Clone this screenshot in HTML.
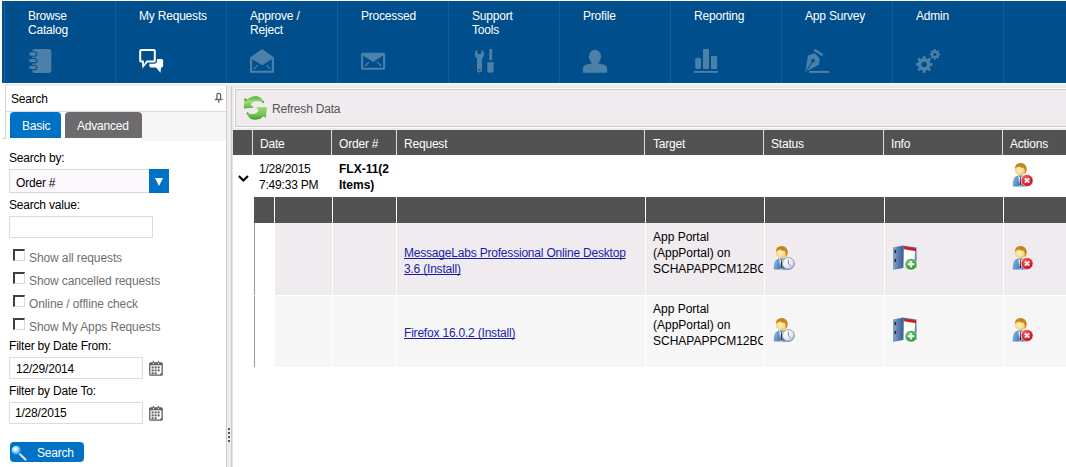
<!DOCTYPE html>
<html><head><meta charset="utf-8">
<style>
*{margin:0;padding:0;box-sizing:border-box}
html,body{width:1066px;height:467px;overflow:hidden;background:#fff;font-family:"Liberation Sans",sans-serif;font-size:12px;letter-spacing:-0.2px;color:#000}
.a{position:absolute}
.t{position:absolute;white-space:nowrap;line-height:16px}
/* nav */
#nav{position:absolute;left:2px;top:1px;width:1064px;height:82px;background:#004f8c}
.sep{position:absolute;top:0;width:1px;height:82px;background:#0760aa}
.nl{position:absolute;top:9px;color:#fff;line-height:14px;white-space:nowrap}
.ic{position:absolute;top:48px;width:24px;height:24px}
/* left */
.lbl{position:absolute;left:9px;line-height:16px;white-space:nowrap}
.chk{position:absolute;left:13px;width:12px;height:12px;border:1px solid #d8d8d8;border-top:2px solid #3f3f3f;border-left:2px solid #3f3f3f;background:#fff}
.ctx{position:absolute;left:29px;color:#707070;line-height:16px;white-space:nowrap;letter-spacing:-0.1px}
.inp{position:absolute;left:9px;border:1px solid #dcdcdc;background:#fff}
/* grid */
.hd{position:absolute;top:130px;height:25px;background:#525252}
.hdt{position:absolute;top:136px;color:#fff;line-height:16px;white-space:nowrap}
.sh{position:absolute;top:197px;height:26px;background:#525252}
.r1{position:absolute;top:223px;height:72px;background:#efebef}
.r2{position:absolute;top:296px;height:71px;background:#f6f6f6}
.lnk{color:#1c1ca8;text-decoration:underline;text-decoration-skip-ink:none}
</style></head><body>

<!-- NAV -->
<div id="nav">
  <div class="a" style="left:2px;top:0;width:1px;height:82px;background:#0b62a8"></div>
  <div class="sep" style="left:113px"></div>
  <div class="sep" style="left:224px"></div>
  <div class="sep" style="left:335px"></div>
  <div class="sep" style="left:446px"></div>
  <div class="sep" style="left:557px"></div>
  <div class="sep" style="left:668px"></div>
  <div class="sep" style="left:779px"></div>
  <div class="sep" style="left:890px"></div>
  <div class="sep" style="left:1001px"></div>
</div>
<div class="nl" style="left:28px">Browse<br>Catalog</div>
<div class="nl" style="left:139px">My Requests</div>
<div class="nl" style="left:250px">Approve /<br>Reject</div>
<div class="nl" style="left:361px">Processed</div>
<div class="nl" style="left:472px">Support<br>Tools</div>
<div class="nl" style="left:583px">Profile</div>
<div class="nl" style="left:694px">Reporting</div>
<div class="nl" style="left:805px">App Survey</div>
<div class="nl" style="left:916px">Admin</div>

<!-- LEFT PANEL -->
<div class="a" style="left:5px;top:86px;width:1px;height:52px;background:#d4d4d4"></div>
<div class="a" style="left:2px;top:138px;width:4px;height:1px;background:#d4d4d4"></div>
<div class="t" style="left:11px;top:91px">Search</div>
<div class="a" style="left:5px;top:111px;width:222px;height:1px;background:#dcdcdc"></div>
<div class="a" style="left:142px;top:112px;width:84px;height:29px;background:#f6f6f6"></div>
<div class="a" style="left:10px;top:112px;width:51px;height:26px;background:#0072c6;border-radius:4px 4px 0 0"></div>
<div class="t" style="left:22px;top:118px;color:#fff">Basic</div>
<div class="a" style="left:65px;top:112px;width:77px;height:26px;background:#6d6b6d;border-radius:4px 4px 0 0"></div>
<div class="t" style="left:77px;top:118px;color:#fff">Advanced</div>

<div class="lbl" style="top:150px">Search by:</div>
<div class="inp" style="top:169px;width:160px;height:24px;background:#fdf8fd;border-color:#d8d8d8"></div>
<div class="t" style="left:16px;top:175px">Order #</div>
<div class="a" style="left:149px;top:169px;width:20px;height:24px;background:#0072c6"></div>
<div class="a" style="left:155px;top:178px;width:0;height:0;border-left:4px solid transparent;border-right:4px solid transparent;border-top:8px solid #fff"></div>

<div class="lbl" style="top:197px">Search value:</div>
<div class="inp" style="top:216px;width:144px;height:22px"></div>

<div class="chk" style="top:249px"></div><div class="ctx" style="top:250px">Show all requests</div>
<div class="chk" style="top:272px"></div><div class="ctx" style="top:273px">Show cancelled requests</div>
<div class="chk" style="top:295px"></div><div class="ctx" style="top:296px">Online / offline check</div>
<div class="chk" style="top:318px"></div><div class="ctx" style="top:319px">Show My Apps Requests</div>

<div class="lbl" style="top:338px">Filter by Date From:</div>
<div class="inp" style="top:357px;width:134px;height:22px"></div>
<div class="t" style="left:16px;top:361px">12/29/2014</div>
<div class="lbl" style="top:383px">Filter by Date To:</div>
<div class="inp" style="top:402px;width:134px;height:22px"></div>
<div class="t" style="left:15px;top:405px">1/28/2015</div>

<div class="a" style="left:10px;top:442px;width:74px;height:20px;background:#0072c6;border-radius:4px"></div>
<div class="t" style="left:37px;top:445px;color:#fff">Search</div>

<!-- band under nav -->
<div class="a" style="left:2px;top:84px;width:1064px;height:2px;background:#eeeeee"></div>
<!-- splitter -->
<div class="a" style="left:226px;top:86px;width:1px;height:381px;background:#cdcdcd"></div>
<div class="a" style="left:227px;top:86px;width:4px;height:381px;background:#efebef"></div>
<div class="a" style="left:231px;top:86px;width:1px;height:381px;background:#cdcdcd"></div>
<div class="a" style="left:232px;top:86px;width:834px;height:44px;background:#ebebeb"></div>
<div class="a" style="left:232px;top:130px;width:1px;height:337px;background:#e4e4e4"></div>

<!-- toolbar -->
<div class="a" style="left:234px;top:88px;width:832px;height:40px;border:1px solid #fff;border-right:none"></div>
<div class="a" style="left:235px;top:89px;width:831px;height:38px;background:#efebef;border:1px solid #cdcdcd;border-right:none"></div>
<div class="t" style="left:272px;top:101px;color:#555">Refresh Data</div>

<!-- grid header -->
<div class="a" style="left:233px;top:130px;width:833px;height:25px;background:#dcdcdc"></div>
<div class="hd" style="left:233px;width:19px"></div>
<div class="hd" style="left:253px;width:78px"></div>
<div class="hd" style="left:332px;width:64px"></div>
<div class="hd" style="left:397px;width:247px"></div>
<div class="hd" style="left:645px;width:118px"></div>
<div class="hd" style="left:764px;width:119px"></div>
<div class="hd" style="left:884px;width:118px"></div>
<div class="hd" style="left:1003px;width:63px"></div>
<div class="hdt" style="left:260px">Date</div>
<div class="hdt" style="left:339px">Order #</div>
<div class="hdt" style="left:404px">Request</div>
<div class="hdt" style="left:653px">Target</div>
<div class="hdt" style="left:771px">Status</div>
<div class="hdt" style="left:891px">Info</div>
<div class="hdt" style="left:1010px">Actions</div>

<!-- row 1 -->
<div class="t" style="left:259px;top:161px">1/28/2015<br>7:49:33 PM</div>
<div class="t" style="left:339px;top:161px;font-weight:bold;letter-spacing:0">FLX-11(2<br>Items)</div>

<!-- sub header -->
<div class="sh" style="left:254px;width:20px"></div>
<div class="sh" style="left:275px;width:57px"></div>
<div class="sh" style="left:333px;width:63px"></div>
<div class="sh" style="left:397px;width:248px"></div>
<div class="sh" style="left:646px;width:118px"></div>
<div class="sh" style="left:765px;width:119px"></div>
<div class="sh" style="left:885px;width:118px"></div>
<div class="sh" style="left:1004px;width:62px"></div>

<!-- child rows -->
<div class="a" style="left:254px;top:223px;width:1px;height:72px;background:#999"></div>
<div class="a" style="left:254px;top:296px;width:1px;height:71px;background:#999"></div>
<div class="r1" style="left:275px;width:57px"></div>
<div class="r1" style="left:333px;width:63px"></div>
<div class="r1" style="left:397px;width:248px"></div>
<div class="r1" style="left:646px;width:118px"></div>
<div class="r1" style="left:765px;width:119px"></div>
<div class="r1" style="left:885px;width:118px"></div>
<div class="r1" style="left:1004px;width:62px"></div>
<div class="r2" style="left:275px;width:57px"></div>
<div class="r2" style="left:333px;width:63px"></div>
<div class="r2" style="left:397px;width:248px"></div>
<div class="r2" style="left:646px;width:118px"></div>
<div class="r2" style="left:765px;width:119px"></div>
<div class="r2" style="left:885px;width:118px"></div>
<div class="r2" style="left:1004px;width:62px"></div>

<div class="t lnk" style="left:404px;top:245px">MessageLabs Professional Online Desktop<br>3.6 (Install)</div>
<div class="t lnk" style="left:404px;top:325px">Firefox 16.0.2 (Install)</div>
<div class="t" style="left:653px;top:229px;width:110px;overflow:hidden;letter-spacing:0">App Portal<br>(AppPortal) on<br>SCHAPAPPCM12BOM</div>
<div class="t" style="left:653px;top:301px;width:110px;overflow:hidden;letter-spacing:0">App Portal<br>(AppPortal) on<br>SCHAPAPPCM12BOM</div>


<svg class="a" style="left:0;top:0" width="1066" height="467" viewBox="0 0 1066 467">
 <g fill="#4b80a8">
  <!-- notebook -->
  <rect x="32" y="49" width="19.3" height="24" rx="3"/>
  <g stroke="#004f8c" stroke-width="1.1">
   <rect x="28.6" y="51.8" width="8.2" height="4.4" rx="2.2"/>
   <rect x="28.6" y="58.5" width="8.2" height="4.4" rx="2.2"/>
   <rect x="28.6" y="65.2" width="8.2" height="4.4" rx="2.2"/>
  </g>
  <!-- open envelope -->
  <path d="M250 57.5 L262.2 49 L274 57.5 L274 72.8 L250 72.8 Z M252.2 59.3 L252.2 70.8 L271.8 70.8 L271.8 59.3 L262.2 65.2 Z"/>
  <path d="M254 69 L257.6 65.2" stroke="#4b80a8" stroke-width="1.2" fill="none"/>
  <path d="M270.2 69 L266.6 65.2" stroke="#4b80a8" stroke-width="1.2" fill="none"/>
  <!-- envelope -->
  <path d="M362.6 52.8 H383.6 Q385.1 52.8 385.1 54.3 V68.2 Q385.1 69.7 383.6 69.7 H362.6 Q361.1 69.7 361.1 68.2 V54.3 Q361.1 52.8 362.6 52.8 Z M363.1 55.5 V67.7 H383.1 V55.5 L373.1 62 Z"/>
  <path d="M365 66 L369 62" stroke="#4b80a8" stroke-width="1.2" fill="none"/>
  <path d="M381.2 66 L377.2 62" stroke="#4b80a8" stroke-width="1.2" fill="none"/>
  <!-- tools -->
  <path d="M477.3 49.4 L477.3 53.2 Q479.4 55 481.4 53.2 L481.4 49.4 A5.6 5.6 0 0 1 482 58.6 L482 71.3 Q479.5 73.8 477 71.3 L477 58.6 A5.6 5.6 0 0 1 477.3 49.4 Z"/>
  <circle cx="479.5" cy="70.2" r="0.9" fill="#004f8c"/>
  <rect x="489.3" y="49" width="2.8" height="11.2" rx="0.5"/>
  <path d="M487.2 62.2 H493.7 V64.5 Q493 65.5 493.5 67 V71 Q493.5 72.8 491.5 72.8 H489.2 Q487.3 72.8 487.3 71 V67 Q487.8 65.5 487.2 64.5 Z"/>
  <!-- profile -->
  <ellipse cx="595" cy="56.7" rx="6.1" ry="7"/>
  <path d="M582.9 72.8 V69 Q582.9 65.4 587 64.6 L591 63.6 Q595 66.3 599 63.6 L603 64.6 Q607.1 65.4 607.1 69 V72.8 Z"/>
  <rect x="591.5" y="61" width="7" height="4"/>
  <!-- reporting -->
  <rect x="695.2" y="57.8" width="5.8" height="11.2" rx="2"/>
  <rect x="703" y="49" width="6" height="20" rx="0.8"/>
  <rect x="711" y="55.9" width="6.1" height="13.1" rx="0.8"/>
  <rect x="694" y="70.9" width="24" height="1.9"/>
  <!-- pen -->
  <path d="M808 55.5 L814.5 53.2 L819.6 58.3 L819.1 64.4 L805.2 72 Z"/>
  <circle cx="813" cy="60.6" r="1.9" fill="#004f8c"/>
  <path d="M812.6 61.5 L806 71.2" stroke="#004f8c" stroke-width="1.1" fill="none"/>
  <path d="M814.3 49.8 L822.8 55.2" stroke="#4b80a8" stroke-width="2.4" fill="none"/>
  <rect x="809.2" y="70.9" width="19.9" height="2"/>
 </g>
 <!-- gears -->
 <g fill="#4b80a8" fill-rule="evenodd">
  <path d="M922.78 58.16 L922.72 56.13 L925.68 56.13 L925.62 58.16 L927.61 58.98 L929.00 57.51 L931.09 59.60 L929.62 60.99 L930.44 62.98 L932.47 62.92 L932.47 65.88 L930.44 65.82 L929.62 67.81 L931.09 69.20 L929.00 71.29 L927.61 69.82 L925.62 70.64 L925.68 72.67 L922.72 72.67 L922.78 70.64 L920.79 69.82 L919.40 71.29 L917.31 69.20 L918.78 67.81 L917.96 65.82 L915.93 65.88 L915.93 62.92 L917.96 62.98 L918.78 60.99 L917.31 59.60 L919.40 57.51 L920.79 58.98 Z M926.90 64.40 A2.7 2.7 0 1 0 921.50 64.40 A2.7 2.7 0 1 0 926.90 64.40 Z"/>
  <path d="M934.01 50.50 L933.95 49.08 L935.85 49.08 L935.79 50.50 L937.03 51.01 L937.99 49.97 L939.33 51.31 L938.29 52.27 L938.80 53.51 L940.22 53.45 L940.22 55.35 L938.80 55.29 L938.29 56.53 L939.33 57.49 L937.99 58.83 L937.03 57.79 L935.79 58.30 L935.85 59.72 L933.95 59.72 L934.01 58.30 L932.77 57.79 L931.81 58.83 L930.47 57.49 L931.51 56.53 L931.00 55.29 L929.58 55.35 L929.58 53.45 L931.00 53.51 L931.51 52.27 L930.47 51.31 L931.81 49.97 L932.77 51.01 Z M936.60 54.40 A1.7 1.7 0 1 0 933.20 54.40 A1.7 1.7 0 1 0 936.60 54.40 Z"/>
 </g>
 <!-- speech bubbles -->
 <g fill="#fff">
  <path d="M151.5 59 H161.6 Q163.1 59 163.1 60.5 V66 Q163.1 67.4 161.6 67.4 L161 67.4 L160.5 72.8 L156 67.4 H150.8 Q149.3 67.4 149.3 66 V60.5 Q149.3 59 151.5 59 Z"/>
  <path d="M141.2 48.9 H153.8 Q155.8 48.9 155.8 50.9 V60.4 Q155.8 62.4 153.8 62.4 H147.5 L142.5 68.5 L142 62.4 H141.2 Q139.2 62.4 139.2 60.4 V50.9 Q139.2 48.9 141.2 48.9 Z" fill="#004f8c" stroke="#004f8c" stroke-width="2.6"/>
  <path d="M141.2 48.9 H153.8 Q155.8 48.9 155.8 50.9 V60.4 Q155.8 62.4 153.8 62.4 H147.5 L142.5 68.5 L142 62.4 H141.2 Q139.2 62.4 139.2 60.4 V50.9 Q139.2 48.9 141.2 48.9 Z M141.2 50.9 V60.4 H143.8 L144 64.3 L146.6 60.4 H153.8 V50.9 Z" fill-rule="evenodd"/>
 </g>

 <!-- pin -->
 <g>
  <path d="M216.9 99.2 V94.8 Q216.9 93.4 218.7 93.4 Q220.6 93.4 220.6 94.8 V99.2" fill="#fbfbfb" stroke="#5f5f5f" stroke-width="1.2"/>
  <rect x="214.9" y="98.9" width="7.6" height="1.3" fill="#5f5f5f"/>
  <rect x="218.1" y="99.6" width="1.2" height="3.2" fill="#5f5f5f"/>
 </g>
 <!-- splitter dots -->
 <g fill="#555">
  <rect x="228" y="428" width="2" height="2"/><rect x="228" y="432" width="2" height="2"/>
  <rect x="228" y="436" width="2" height="2"/><rect x="228" y="440" width="2" height="2"/>
 </g>
 <!-- chevron -->
 <path d="M239.6 176.7 L243.4 180.6 L247.2 176.7" stroke="#000" stroke-width="2.1" fill="none" stroke-linecap="square"/>
 <!-- calendars -->
 <g id="cal">
  <path d="M150.6 362.2 H161.3 Q162.8 362.2 162.8 363.7 V374.3 Q162.8 375.8 161.3 375.8 H150.6 Q149.1 375.8 149.1 374.3 V363.7 Q149.1 362.2 150.6 362.2 Z M150.4 365.3 V374.5 H159.8 L161.5 372.8 V365.3 Z" fill="#5f5f5f" fill-rule="evenodd"/>
  <rect x="152.8" y="360.8" width="1.2" height="2.4" fill="#686868"/>
  <rect x="157.8" y="360.8" width="1.2" height="2.4" fill="#686868"/>
  <circle cx="153.4" cy="363.6" r="0.7" fill="#fff"/><circle cx="158.4" cy="363.6" r="0.7" fill="#fff"/>
  <g fill="#5c5c5c">
   <rect x="151.6" y="366.4" width="2" height="2"/><rect x="154.6" y="366.4" width="2" height="2"/><rect x="157.6" y="366.4" width="2" height="2"/>
   <rect x="151.6" y="369.4" width="2" height="2"/><rect x="154.6" y="369.4" width="2" height="2"/><rect x="157.6" y="369.4" width="2" height="2"/>
   <rect x="151.6" y="372.3" width="2" height="2"/><rect x="154.6" y="372.3" width="2" height="2"/>
  </g>
 </g>
 <use href="#cal" x="0" y="45"/>
 <!-- magnifier -->
 <defs>
  <radialGradient id="lens" cx="0.4" cy="0.35" r="0.7">
   <stop offset="0" stop-color="#ffffff"/><stop offset="0.45" stop-color="#9fdcff"/><stop offset="1" stop-color="#1a7fd0"/>
  </radialGradient>
  <linearGradient id="grn" x1="0" y1="0" x2="1" y2="1">
   <stop offset="0" stop-color="#a6dc6a"/><stop offset="1" stop-color="#3a9a2a"/>
  </linearGradient>
  <radialGradient id="head" cx="0.4" cy="0.55" r="0.65">
   <stop offset="0" stop-color="#fff4c4"/><stop offset="0.6" stop-color="#f8d27a"/><stop offset="1" stop-color="#d49a30"/>
  </radialGradient>
  <linearGradient id="body" x1="0" y1="0" x2="1" y2="0.3">
   <stop offset="0" stop-color="#9cc0e4"/><stop offset="0.45" stop-color="#5a8ccc"/><stop offset="1" stop-color="#2f5ea8"/>
  </linearGradient>
  <radialGradient id="red" cx="0.4" cy="0.35" r="0.7">
   <stop offset="0" stop-color="#ff6060"/><stop offset="1" stop-color="#c80010"/>
  </radialGradient>
  <radialGradient id="clk" cx="0.4" cy="0.35" r="0.7">
   <stop offset="0" stop-color="#ffffff"/><stop offset="0.65" stop-color="#e2e6f0"/><stop offset="1" stop-color="#8a96b4"/>
  </radialGradient>
  <radialGradient id="gplus" cx="0.4" cy="0.35" r="0.7">
   <stop offset="0" stop-color="#7fd67f"/><stop offset="1" stop-color="#148a20"/>
  </radialGradient>
  <linearGradient id="binder" x1="0" y1="0" x2="1" y2="0">
   <stop offset="0" stop-color="#8aa6cc"/><stop offset="0.5" stop-color="#5e7fb0"/><stop offset="1" stop-color="#3d5f95"/>
  </linearGradient>
  <g id="person">
   <path d="M12.8 269.6 Q12.4 262.5 15 260 Q16.8 258.3 20.5 258.2 Q24.6 258.2 26.4 260.2 Q28.2 262.5 28 269.6 Z" fill="url(#body)"/>
   <path d="M18.3 258.4 L20.5 261 L22.7 258.4 L21.6 268.5 L20.5 269.4 L19.4 268.5 Z" fill="#f4f6fa"/>
   <path d="M20.1 260.6 L20.9 260.6 L21.5 267.5 L20.5 268.8 L19.5 267.5 Z" fill="#2a2a2a"/>
   <ellipse cx="20.7" cy="252.3" rx="5.9" ry="6.1" fill="url(#head)"/>
   <path d="M14.9 251.8 Q15 246.2 20.7 246.1 Q26.4 246.2 26.6 252.5 Q26.4 255.5 25 257 Q25.2 252.5 23.5 250.6 Q21.5 251.2 19.5 249.4 Q16.5 249.6 14.9 251.8 Z" fill="#c8861a"/>
  </g>
  <g id="xbadge">
   <circle cx="27.1" cy="263.5" r="6" fill="url(#red)" stroke="#fff" stroke-width="0.7"/>
   <path d="M24.9 261.3 L29.3 265.7 M29.3 261.3 L24.9 265.7" stroke="#fff" stroke-width="1.8"/>
  </g>
  <g id="cbadge">
   <circle cx="27.4" cy="263.6" r="6" fill="url(#clk)" stroke="#7d88a8" stroke-width="0.7"/>
   <path d="M27.4 259.9 V263.8 L29.8 265.9" stroke="#6a78a0" stroke-width="0.9" fill="none"/>
  </g>
  <g id="info">
   <path d="M893 247.5 L903 245.5 L903 268 L893 270 Z" fill="url(#binder)"/>
   <path d="M903 245.5 L916.5 247.6 L916.5 268 L903 268 Z" fill="#5a7aad"/>
   <path d="M904 247 L915.5 249 L914 266 L903.5 268 Z" fill="#fff"/>
   <path d="M904 246.4 L916 248.6 L916 251.3 L904 249.2 Z" fill="#d41a1a"/>
   <rect x="894.5" y="250" width="1.6" height="3" fill="#222"/>
   <rect x="894.5" y="259" width="1.6" height="3" fill="#222"/>
   <circle cx="911" cy="264.2" r="5.8" fill="url(#gplus)" stroke="#fff" stroke-width="0.5"/>
   <path d="M907.9 264.3 H914.5 M911.2 261 V267.6" stroke="#fff" stroke-width="1.9"/>
  </g>
 </defs>
 <g>
  <circle cx="16.2" cy="450.3" r="4.5" fill="url(#lens)"/>
  <path d="M20 454.3 L25.6 459.6" stroke="#d8dde6" stroke-width="2.2" stroke-linecap="round"/>
 </g>
 <!-- refresh -->
 <defs>
  <linearGradient id="grn1" x1="0" y1="0" x2="0" y2="1">
   <stop offset="0" stop-color="#4fae3c"/><stop offset="0.45" stop-color="#a4da74"/><stop offset="1" stop-color="#5cb444"/>
  </linearGradient>
  <linearGradient id="grn2" x1="0" y1="0" x2="0" y2="1">
   <stop offset="0" stop-color="#9ed870"/><stop offset="0.6" stop-color="#74c452"/><stop offset="1" stop-color="#3f9a32"/>
  </linearGradient>
 </defs>
 <path d="M264 102.3 C262.5 98.3 259.2 96.2 255.5 96.2 C252 96.2 249.2 97.5 247.3 99.6 L244.3 98 L243.9 108.4 L253.8 107.8 L250.6 104.4 C252.2 102.4 254 101.3 256.2 101.3 C258.8 101.3 261.5 101.9 264 102.3 Z" fill="url(#grn1)"/>
 <path d="M246.5 113 C248 117.2 251 119.7 254.5 119.7 C258.5 119.7 261.5 118.6 263.4 116.2 L265.9 117.8 L266.8 107.1 L256 107.4 L258.8 110.5 C257.3 112.8 255.3 113.9 252.8 114 C250.5 114.1 248.4 113.7 246.5 113 Z" fill="url(#grn2)"/>
 <circle cx="245.8" cy="99.8" r="1.1" fill="#3f9a32"/>
 <circle cx="263" cy="102" r="1" fill="#3f9a32"/>
 <circle cx="247.6" cy="113.3" r="1" fill="#4aa236"/>
 <!-- grid icons -->
 <use href="#person" x="1000" y="-83"/><use href="#xbadge" x="1000" y="-83"/>
 <use href="#person" x="761"/><use href="#cbadge" x="761"/>
 <use href="#info"/>
 <use href="#person" x="1000"/><use href="#xbadge" x="1000"/>
 <use href="#person" x="761" y="72"/><use href="#cbadge" x="761" y="72"/>
 <use href="#info" y="72"/>
 <use href="#person" x="1000" y="72"/><use href="#xbadge" x="1000" y="72"/>
</svg>

</body></html>
